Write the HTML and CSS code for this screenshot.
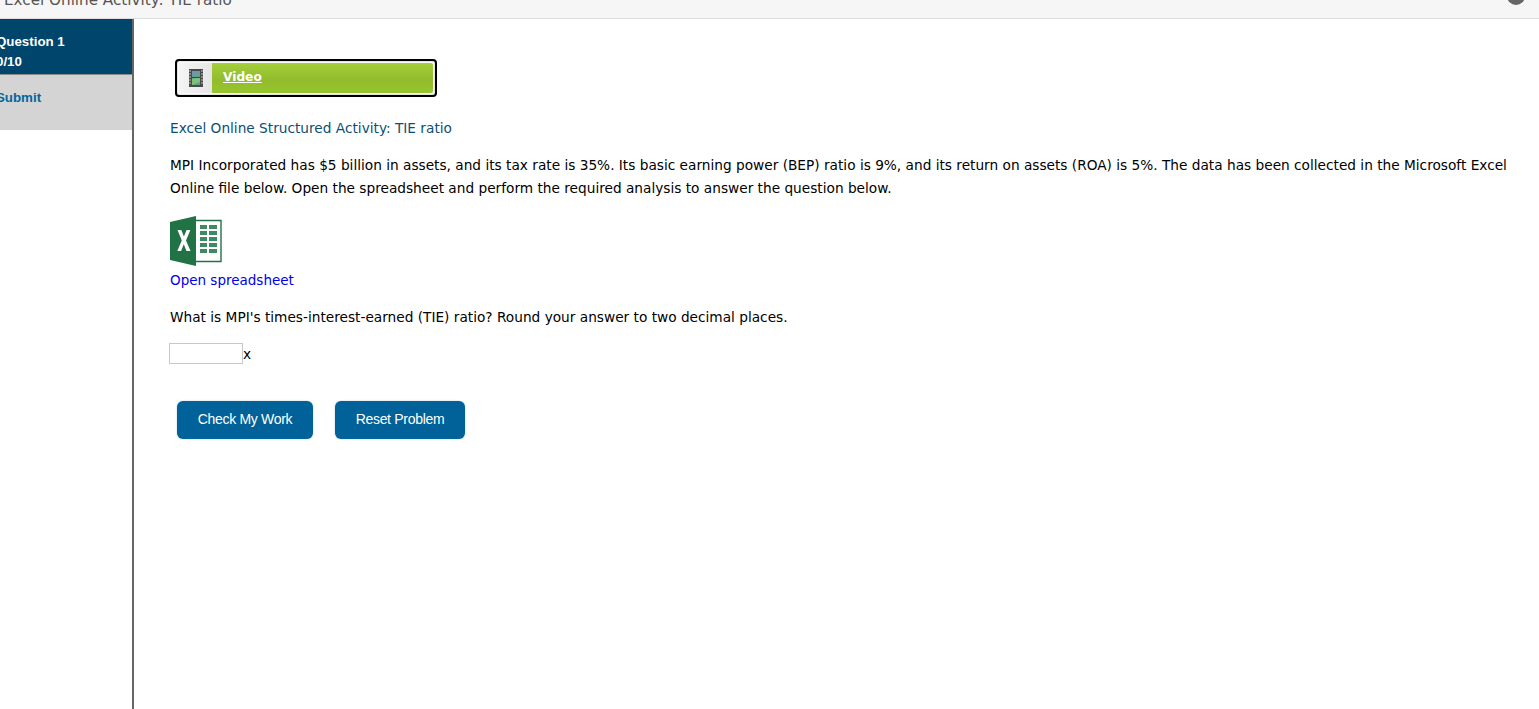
FILE: index.html
```html
<!DOCTYPE html>
<html lang="en">
<head>
  <meta charset="UTF-8" />
  <title>Excel Online Activity: TIE ratio</title>
  <link rel="stylesheet" href="styles.css">
</head>
<body>
  <div class="titlebar">
    <span class="titlebar-text">Excel Online Activity: TIE ratio</span>
    <span class="close-dot"></span>
  </div>

  <div class="layout">
    <div class="sidebar">
      <div class="nav-current">
        <div>Question 1</div>
        <div>0/10</div>
      </div>
      <div class="nav-submit">Submit</div>
    </div>

    <div class="content">
      <div class="video-box">
        <div class="video-inner">
          <span class="video-icon">
            <svg width="14" height="18" viewBox="0 0 14 18">
              <rect width="14" height="18" fill="#4a4a4a"/>
              <path d="M3 2h8v14H3z" fill="#5aa08c"/>
              <path d="M3 2h8v5H3z" fill="#6f98a8"/>
              <path d="M3 10l8-2v5l-8 3z" fill="#7fbf78"/>
              <path d="M0 2h2M0 5h2M0 8h2M0 11h2M0 14h2M12 2h2M12 5h2M12 8h2M12 11h2M12 14h2" stroke="#bbb" stroke-width="1.2"/>
              <path d="M3 8.500h8" stroke="#444" stroke-width="1"/>
            </svg>
          </span>
          <a class="video-link" href="#">Video</a>
        </div>
      </div>

      <p class="activity-title">Excel Online Structured Activity: TIE ratio</p>
      <p class="problem-text">MPI Incorporated has $5 billion in assets, and its tax rate is 35%. Its basic earning power (BEP) ratio is 9%, and its return on assets (ROA) is 5%. The data has been collected in the Microsoft Excel Online file below. Open the spreadsheet and perform the required analysis to answer the question below.</p>

      <svg class="excel-icon" width="52" height="50" viewBox="0 0 52 50">
        <path d="M24 4.500h27v41H24z" fill="#fff" stroke="#217346" stroke-width="1.4"/>
        <path d="M30 9h7v4h-7zM39 9h8v4h-8zM30 15h7v4h-7zM39 15h8v4h-8zM30 21h7v4h-7zM39 21h8v4h-8zM30 27h7v4h-7zM39 27h8v4h-8zM30 33h7v4h-7zM39 33h8v4h-8z" fill="#3f8a63"/>
        <path d="M0 6L26 0v50L0 44z" fill="#217346"/>
        <path d="M7.500 14h3.800l2.600 6.500 2.700-6.500h3.800l-4.400 10.500L20.500 35h-4l-2.700-6.800-2.700 6.800H7.300l4.500-10.500z" fill="#fff"/>
      </svg>
      <a class="sheet-link" href="#">Open spreadsheet</a>

      <p class="question-text">What is MPI's times-interest-earned (TIE) ratio? Round your answer to two decimal places.</p>

      <div class="answer-row">
        <input class="answer-input" type="text">
        <span>x</span>
      </div>

      <div class="actions">
        <button class="action-btn check-btn">Check My Work</button>
        <button class="action-btn reset-btn">Reset Problem</button>
      </div>
    </div>
  </div>
</body>
</html>
```

FILE: styles.css
```css
html, body {
  height: 100%;
}
body {
  margin: 0;
  overflow: hidden;
  background: #fff;
  font-family: "DejaVu Sans", Verdana, sans-serif;
  font-size: 13.7px;
  color: #000;
}
.titlebar {
  height: 18px;
  background: #f6f6f6;
  border-bottom: 1px solid #dcdcdc;
  display: flex;
  justify-content: space-between;
  overflow: hidden;
}
.titlebar-text {
  margin: -9px 0 0 4px;
  font-size: 15.200px;
  line-height: 18px;
  color: #555;
}
.close-dot {
  width: 18px;
  height: 18px;
  margin: -13px 14px 0 0;
  border-radius: 50%;
  background: #666;
}
.layout {
  display: flex;
  height: 690px;
}
.sidebar {
  width: 132px;
  flex: none;
  border-right: 2px solid #666;
  font-family: "Liberation Sans", Arial, sans-serif;
  font-size: 13.300px;
  font-weight: bold;
  overflow: hidden;
}
.nav-current {
  height: 56px;
  box-sizing: border-box;
  padding: 13px 0 0 0;
  background: #00456b;
  color: #fff;
  line-height: 20px;
  text-indent: -4px;
  border-bottom: 1px solid #8c8c8c;
}
.nav-submit {
  height: 55px;
  box-sizing: border-box;
  padding-top: 14px;
  line-height: 18px;
  text-indent: -4px;
  background: #d4d4d4;
  color: #00689b;
}
.content {
  flex: 1;
  padding: 40px 20px 0 36px;
  min-width: 0;
}
.video-box {
  width: 254px;
  height: 30px;
  margin-left: 5px;
  padding: 2px;
  border: 2px solid #000;
  border-radius: 4px;
  box-sizing: content-box;
  background: #fff;
  box-shadow: inset 0 0 2px #999;
}
.video-inner {
  display: flex;
  height: 100%;
  background: linear-gradient(#a5d03c, #92bc2c 55%, #96c62c);
  border-radius: 2px;
}
.video-icon {
  width: 33px;
  flex: none;
  display: flex;
  align-items: center;
  justify-content: center;
  background: linear-gradient(90deg, #f4f4f4, #e6e6e6);
}
.video-link {
  margin-left: 11px;
  line-height: 29px;
  font-family: "DejaVu Sans", Verdana, sans-serif;
  font-weight: bold;
  font-size: 12.200px;
  color: #fff;
}
.activity-title {
  margin: 22px 0 0;
  line-height: 18px;
  color: #0b4f73;
}
.problem-text {
  margin: 17px 0 0;
  line-height: 23px;
}
.excel-icon {
  display: block;
  margin-top: 16px;
}
.sheet-link {
  display: block;
  margin-top: 5px;
  line-height: 18px;
  font-size: 13.500px;
  color: #0000ee;
  text-decoration: none;
}
.question-text {
  margin: 19px 0 0;
  line-height: 18px;
}
.answer-row {
  display: flex;
  align-items: center;
  margin-top: 17px;
  margin-left: -1px;
}
.answer-input {
  width: 74px;
  height: 21px;
  box-sizing: border-box;
  padding: 0;
  border: 1px solid #c8c8c8;
  background: #fff;
}
.actions {
  display: flex;
  gap: 22px;
  margin: 37px 0 0 7px;
}
.action-btn {
  height: 38px;
  border: none;
  border-radius: 6px;
  background: #006298;
  color: #fff;
  font-family: "Liberation Sans", Arial, sans-serif;
  font-size: 14px;
  letter-spacing: -0.3px;
  padding: 0 0 2px;
  box-shadow: 0 0 2px #b0c8d6;
}
.check-btn {
  width: 136px;
}
.reset-btn {
  width: 130px;
}
```
